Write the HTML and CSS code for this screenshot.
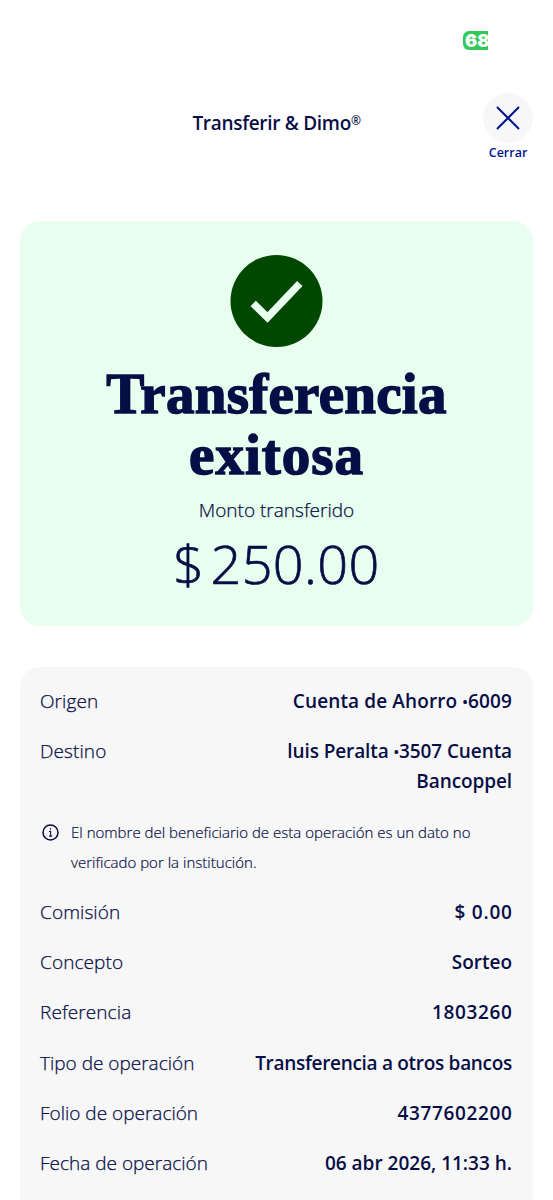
FILE: index.html
```html
<!DOCTYPE html>
<html lang="es">
<head>
<meta charset="utf-8">
<title>Transferir &amp; Dimo</title>
<link rel="stylesheet" href="styles.css">
</head>
<body>
<main class="screen">
  <div class="status"><span class="battery">68</span></div>
  <header class="header">
    <h1 class="header-title">Transferir &amp; Dimo<span class="reg">®</span></h1>
    <button class="close" type="button">
      <span class="close-disc"><svg width="26" height="26" viewBox="0 0 26 26"><path d="M2 2 24 24M24 2 2 24" fill="none" stroke="#001391" stroke-width="2"/></svg></span>
      <span class="close-label">Cerrar</span>
    </button>
  </header>
  <section class="result">
    <svg class="check" width="93" height="93" viewBox="0 0 93 93"><circle cx="46.5" cy="46" r="46" fill="#004800"/><path d="M23.2 48.5 37.5 62.5 69.8 28.5" fill="none" stroke="#e8ffef" stroke-width="7.5"/></svg>
    <h2 class="result-title">Transferencia <span class="result-word">exitosa</span></h2>
    <p class="caption">Monto transferido</p>
    <p class="amount"><span class="currency">$</span><span>250.00</span></p>
  </section>
  <section class="details">
    <div class="row"><span class="label">Origen</span><span class="value v-origin">Cuenta de Ahorro <span class="dot">•</span>6009</span></div>
    <div class="row"><span class="label">Destino</span><span class="value v-dest">luis Peralta <span class="dot">•</span>3507 Cuenta Bancoppel</span></div>
    <div class="note">
      <svg class="info" width="17" height="17" viewBox="0 0 17 17"><circle cx="8.5" cy="8.5" r="7.5" fill="none" stroke="#070e46" stroke-width="1.5"/><path d="M8.5 4V5.6M7.1 7.4H8.6V12M7 12.1H10.2" fill="none" stroke="#070e46" stroke-width="1.1"/></svg>
      <p class="note-text">El nombre del beneficiario de esta operación es un dato no verificado por la institución.</p>
    </div>
    <div class="row"><span class="label">Comisión</span><span class="value zero">$ 0.00</span></div>
    <div class="row"><span class="label">Concepto</span><span class="value">Sorteo</span></div>
    <div class="row"><span class="label">Referencia</span><span class="value digits">1803260</span></div>
    <div class="row"><span class="label op">Tipo de operación</span><span class="value type">Transferencia a otros bancos</span></div>
    <div class="row"><span class="label op">Folio de operación</span><span class="value digits">4377602200</span></div>
    <div class="row"><span class="label op">Fecha de operación</span><span class="value">06 abr 2026, 11:33 h.</span></div>
  </section>
</main>
</body>
</html>
```
FILE: styles.css
```css
* { box-sizing: border-box; }
html { background: #fff; }
body { margin: 0; font-family: "Open Sans", "Noto Sans", sans-serif; color: #070e46; }
h1, h2, p { margin: 0; }
.screen { width: 553px; height: 1200px; overflow: hidden; display: flex; flex-direction: column; padding: 0 20px; background: #fff; }
.status { flex: none; height: 93px; padding: 31px 45px 0 0; display: flex; justify-content: flex-end; align-items: flex-start; }
.battery { width: 25px; height: 19px; overflow: hidden; padding-left: 2px; border-radius: 6px 0 0 6px; background: #34c759; color: #fff; font: 900 18px/19px Inter, sans-serif; }
.header { flex: none; height: 128px; display: grid; grid-template-columns: 50px 1fr 50px; align-items: start; }
.header-title { grid-column: 2; padding-top: 15px; text-align: center; font-size: 19px; line-height: 30px; font-weight: 550; letter-spacing: -0.3px; white-space: nowrap; }
.reg { font-size: 12px; line-height: 1; vertical-align: 5px; }
.close { grid-column: 3; border: 0; padding: 0; background: none; display: flex; flex-direction: column; align-items: center; font: inherit; color: #001391; }
.close-disc { width: 50px; height: 50px; border-radius: 50%; background: #f7f7f7; display: flex; align-items: center; justify-content: center; }
.close-label { font-size: 12.5px; line-height: 20px; font-weight: 600; }
.result { flex: none; height: 405px; border-radius: 20px; background: #e8ffef; padding-top: 34px; display: flex; flex-direction: column; align-items: center; text-align: center; }
.check { flex: none; }
.result-title { width: 420px; margin-top: 16px; padding: 0 30px; font: 700 57px/60.5px "Liberation Serif", serif; letter-spacing: 0.3px; -webkit-text-stroke: 1.5px #070e46; }
.result-word { letter-spacing: 1px; }
.caption { margin-top: 10px; font-size: 19px; line-height: 30px; font-weight: 300; -webkit-text-stroke: 0.25px #070e46; }
.amount { display: flex; gap: 6px; font-size: 54px; line-height: 76px; font-weight: 300; letter-spacing: 0.4px; -webkit-text-stroke: 0.7px #070e46; }
.details { flex: none; height: 580px; margin-top: 41px; padding: 19px 21px 19px 20px; border-radius: 20px 20px 0 0; background: #f7f7f7; display: flex; flex-direction: column; gap: 20.3px; font-size: 19px; line-height: 30px; }
.row { display: flex; justify-content: space-between; }
.label { font-weight: 300; white-space: nowrap; letter-spacing: 0.1px; -webkit-text-stroke: 0.25px #070e46; }
.op { letter-spacing: 0; }
.value { font-weight: 550; text-align: right; white-space: nowrap; }
.v-origin { letter-spacing: 0.12px; }
.dot { font-size: 15px; line-height: 1; vertical-align: 1px; }
.type { letter-spacing: -0.3px; }
.digits { letter-spacing: 0.65px; margin-right: -0.65px; }
.zero { letter-spacing: 0.8px; margin-right: -0.8px; }
.v-dest { width: 240px; white-space: normal; letter-spacing: -0.1px; }
.note { display: flex; gap: 12px; padding: 0 0 0 2px; }
.info { flex: none; margin-top: 7px; }
.note-text { width: 410px; font-size: 15px; font-weight: 300; letter-spacing: 0.02px; -webkit-text-stroke: 0.2px #070e46; }
```
